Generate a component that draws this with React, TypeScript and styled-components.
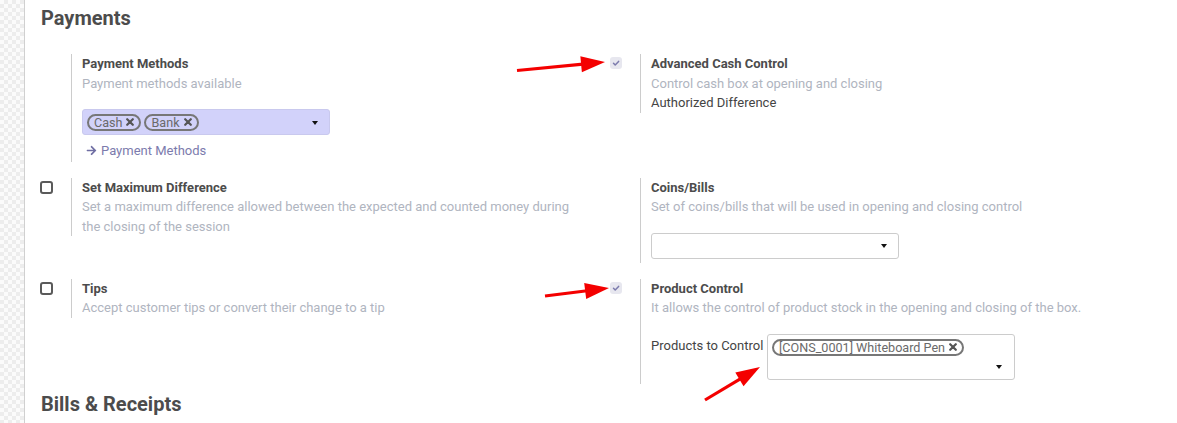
import React from "react";
import styled, { createGlobalStyle } from "styled-components";
import { FaArrowRight } from "react-icons/fa";

const GlobalStyle = createGlobalStyle`
  html, body { margin: 0; padding: 0; }
  body {
    font-family: Roboto, "Liberation Sans", Arial, sans-serif;
    font-size: 13px;
    color: #4c4c4c;
    overflow: hidden;
  }
  * { box-sizing: border-box; }
`;

const Page = styled.div`
  position: relative;
  display: flex;
  min-height: 423px;
  padding: 0 14px 0 24px;
  background-color: #fbfbfb;
  background-image: linear-gradient(45deg, #ededed 25%, transparent 25%, transparent 75%, #ededed 75%),
    linear-gradient(45deg, #ededed 25%, transparent 25%, transparent 75%, #ededed 75%);
  background-size: 8px 8px;
  background-position: 0 0, 4px 4px;
`;

const Sheet = styled.div`
  flex: 1;
  background: #fff;
  border-left: 1px solid #d0d0d0;
  border-right: 1px solid #c8c8d6;
  padding: 0 0 60px 15px;
`;

const SectionTitle = styled.h2<{ $top: number }>`
  margin: ${(p) => p.$top}px 0 24px 1px;
  font-size: 20px;
  line-height: 24px;
  font-weight: 700;
  color: #4c4c4c;
`;

const SettingsGrid = styled.div`
  display: grid;
  grid-template-columns: repeat(2, 569px);
  row-gap: 16px;
  align-items: start;
`;

const SettingBox = styled.div`
  display: flex;
`;

const LeftPane = styled.div`
  width: 31px;
  flex: none;
  padding-top: 3px;
`;

const RightPane = styled.div<{ $pb?: number }>`
  flex: 1;
  border-left: 1px solid #cccccc;
  padding: 0 28px ${(p) => p.$pb ?? 0}px 10px;
`;

const Title = styled.div`
  font-weight: 700;
  line-height: 19.5px;
  color: #4c4c4c;
`;

const Desc = styled.div`
  line-height: 19.5px;
  color: #b0b5bf;
`;

const PlainLine = styled.div`
  line-height: 19.5px;
  color: #444;
`;

const CheckBox = styled.div`
  width: 13px;
  height: 13px;
  border: 2px solid #5a5a5a;
  border-radius: 3px;
  background: #fff;
`;

const DisabledCheck = styled.div`
  width: 12px;
  height: 12px;
  margin-left: 1px;
  border-radius: 3px;
  background: #e7e7ef;
  display: flex;
  align-items: center;
  justify-content: center;
`;

const Select = styled.div<{ $bg: string; $border: string; $mb?: number }>`
  margin-top: 16px;
  margin-bottom: ${(p) => p.$mb ?? 0}px;
  width: 248px;
  height: 26px;
  display: flex;
  align-items: center;
  gap: 3px;
  padding: 0 11px 0 4px;
  background: ${(p) => p.$bg};
  border: 1px solid ${(p) => p.$border};
  border-radius: 3px;
`;

const Caret = styled.span`
  margin-left: auto;
  width: 0;
  height: 0;
  margin-top: 1px;
  border-left: 3.5px solid transparent;
  border-right: 3.5px solid transparent;
  border-top: 4px solid #111;
`;

const Tag = styled.span`
  display: inline-flex;
  align-items: center;
  gap: 4px;
  height: 17px;
  padding: 0 5px 0 5px;
  border: 2px solid #777;
  border-radius: 9px;
  font-size: 12.6px;
  color: #6a6a6a;
  white-space: nowrap;
  background: transparent;
`;

const Link = styled.div`
  margin-top: 6px;
  padding-left: 4px;
  display: flex;
  align-items: center;
  gap: 4px;
  line-height: 19.5px;
  color: #7c7bad;
`;

const FieldRow = styled.div`
  display: flex;
  margin-top: 16px;
  margin-bottom: 4px;
`;

const FieldLabel = styled.div`
  width: 116px;
  flex: none;
  padding-top: 2.5px;
  line-height: 19.5px;
  color: #444;
`;

const ManyBox = styled.div`
  width: 248px;
  min-height: 46px;
  border: 1px solid #cccccc;
  border-radius: 3px;
  padding: 4px 12px 0 4px;
  display: flex;
  flex-wrap: wrap;
  align-content: flex-start;
`;

const CaretRow = styled.div`
  width: 100%;
  height: 22px;
  display: flex;
  align-items: center;
`;

const Overlay = styled.svg`
  position: absolute;
  left: 0;
  top: 0;
  pointer-events: none;
`;

const XIcon = () => (
  <svg width="8" height="8" viewBox="0 0 8 8">
    <path d="M1.2 1.2 L6.8 6.8 M6.8 1.2 L1.2 6.8" stroke="#555" strokeWidth="2.2" strokeLinecap="round" />
  </svg>
);

const CheckMark = () => (
  <svg width="8" height="8" viewBox="0 0 8 8">
    <path d="M1.5 4.3 L3.2 6 L6.6 2.4" stroke="#7c7bad" strokeWidth="1.5" fill="none" strokeLinecap="round" strokeLinejoin="round" />
  </svg>
);

type ArrowProps = { x1: number; y1: number; x2: number; y2: number };
const Arrow = ({ x1, y1, x2, y2 }: ArrowProps) => {
  const dx = x2 - x1;
  const dy = y2 - y1;
  const len = Math.hypot(dx, dy);
  const ux = dx / len;
  const uy = dy / len;
  const headLen = 24;
  const half = 8;
  const bx = x2 - ux * headLen;
  const by = y2 - uy * headLen;
  const nx = -uy;
  const ny = ux;
  const pts = `${x2},${y2} ${bx + nx * half},${by + ny * half} ${bx - nx * half},${by - ny * half}`;
  return (
    <g>
      <line x1={x1} y1={y1} x2={bx + ux * 2} y2={by + uy * 2} stroke="#f40000" strokeWidth="3.2" />
      <polygon points={pts} fill="#f40000" />
    </g>
  );
};

export default function App() {
  return (
    <>
      <GlobalStyle />
      <Page>
        <Sheet>
          <SectionTitle $top={6}>Payments</SectionTitle>
          <SettingsGrid>
            <SettingBox>
              <LeftPane />
              <RightPane $pb={1}>
                <Title>Payment Methods</Title>
                <Desc>Payment methods available</Desc>
                <Select $bg="#d2d2fa" $border="#c9c9ee">
                  <Tag>
                    Cash <XIcon />
                  </Tag>
                  <Tag>
                    Bank <XIcon />
                  </Tag>
                  <Caret />
                </Select>
                <Link>
                  <FaArrowRight size={11} color="#6f6ea3" />
                  Payment Methods
                </Link>
              </RightPane>
            </SettingBox>
            <SettingBox>
              <LeftPane>
                <DisabledCheck>
                  <CheckMark />
                </DisabledCheck>
              </LeftPane>
              <RightPane>
                <Title>Advanced Cash Control</Title>
                <Desc>Control cash box at opening and closing</Desc>
                <PlainLine>Authorized Difference</PlainLine>
              </RightPane>
            </SettingBox>

            <SettingBox>
              <LeftPane>
                <CheckBox />
              </LeftPane>
              <RightPane>
                <Title>Set Maximum Difference</Title>
                <Desc>
                  Set a maximum difference allowed between the expected and counted money during the closing of the
                  session
                </Desc>
              </RightPane>
            </SettingBox>
            <SettingBox>
              <LeftPane />
              <RightPane>
                <Title>Coins/Bills</Title>
                <Desc>Set of coins/bills that will be used in opening and closing control</Desc>
                <Select $bg="#ffffff" $border="#cccccc" $mb={4}>
                  <Caret />
                </Select>
              </RightPane>
            </SettingBox>

            <SettingBox>
              <LeftPane>
                <CheckBox />
              </LeftPane>
              <RightPane>
                <Title>Tips</Title>
                <Desc>Accept customer tips or convert their change to a tip</Desc>
              </RightPane>
            </SettingBox>
            <SettingBox>
              <LeftPane>
                <DisabledCheck>
                  <CheckMark />
                </DisabledCheck>
              </LeftPane>
              <RightPane>
                <Title>Product Control</Title>
                <Desc>It allows the control of product stock in the opening and closing of the box.</Desc>
                <FieldRow>
                  <FieldLabel>Products to Control</FieldLabel>
                  <ManyBox>
                    <Tag>
                      [CONS_0001] Whiteboard Pen <XIcon />
                    </Tag>
                    <CaretRow>
                      <Caret />
                    </CaretRow>
                  </ManyBox>
                </FieldRow>
              </RightPane>
            </SettingBox>
          </SettingsGrid>
          <SectionTitle $top={8}>Bills &amp; Receipts</SectionTitle>
        </Sheet>
        <Overlay width="1177" height="423" viewBox="0 0 1177 423">
          <Arrow x1={517} y1={70.5} x2={605} y2={62} />
          <Arrow x1={545} y1={296} x2={609} y2={288} />
          <Arrow x1={705} y1={400} x2={760} y2={367} />
        </Overlay>
      </Page>
    </>
  );
}
